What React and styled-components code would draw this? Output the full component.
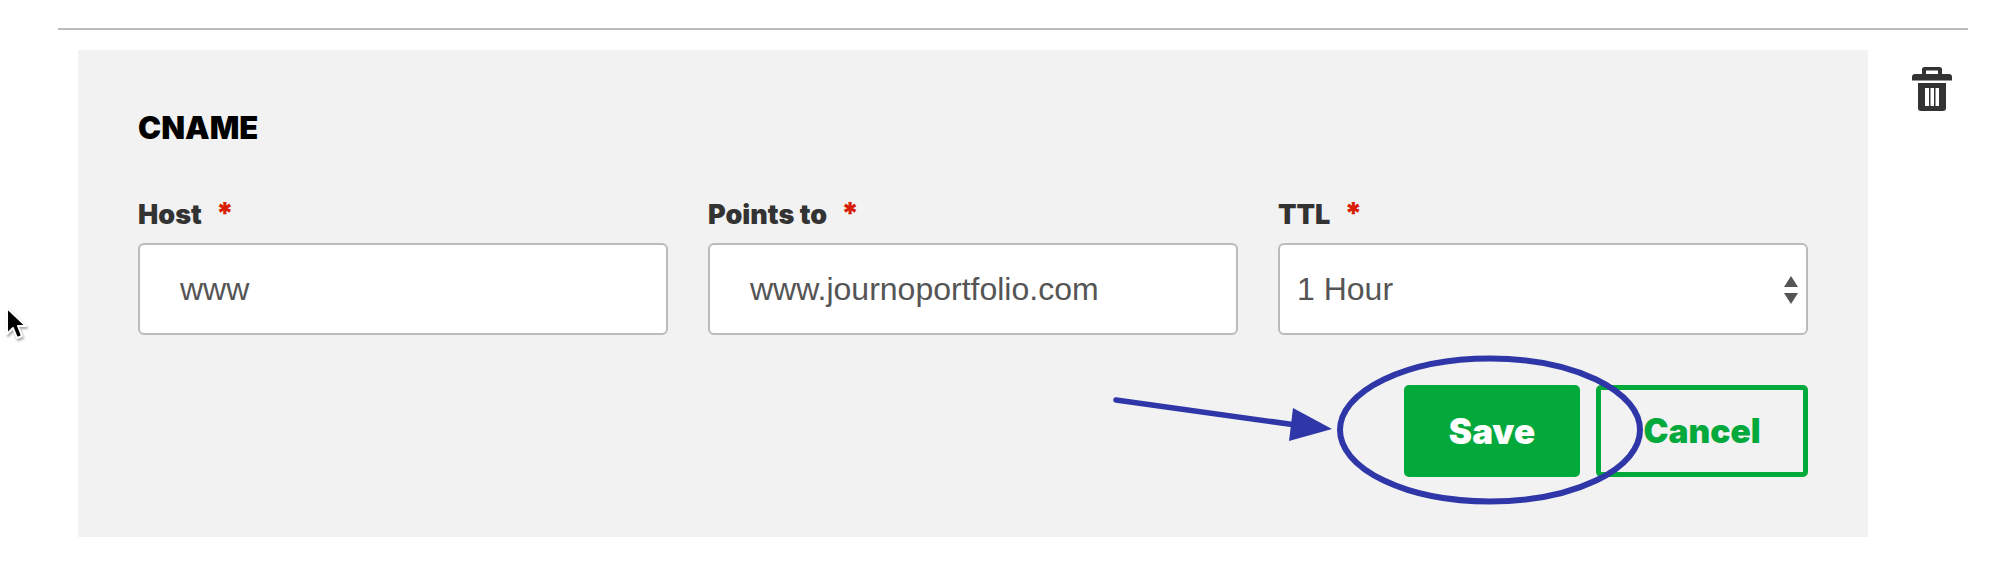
import React from "react";
import styled, { createGlobalStyle } from "styled-components";

const GlobalStyle = createGlobalStyle`
  html, body {
    margin: 0;
    padding: 0;
    background: #fff;
  }
`;

const headingFont = `Inter, "Noto Sans", sans-serif`;
const fieldFont = `"Liberation Sans", Arial, sans-serif`;

const Page = styled.div`
  position: relative;
  width: 1998px;
  height: 584px;
  overflow: hidden;
  padding-top: 28px;
  box-sizing: border-box;
`;

const Rule = styled.hr`
  width: 1910px;
  height: 2px;
  margin: 0 0 20px 58px;
  border: 0;
  background: #bcbcbc;
`;

const Row = styled.div`
  display: flex;
  align-items: flex-start;
  padding-left: 78px;
`;

const Panel = styled.section`
  width: 1790px;
  height: 487px;
  box-sizing: border-box;
  padding: 63px 60px 0 60px;
  background: #f2f2f2;
`;

const Title = styled.h2`
  margin: 0 0 56px;
  font-family: ${headingFont};
  font-size: 31px;
  line-height: 30px;
  font-weight: 900;
  color: #000;
`;

const Fields = styled.div`
  display: grid;
  grid-template-columns: repeat(3, 530px);
  column-gap: 40px;
`;

const Field = styled.div`
  position: relative;
  display: flex;
  flex-direction: column;
`;

const Label = styled.label`
  height: 44px;
  font-family: ${headingFont};
  font-size: 27px;
  line-height: 28px;
  font-weight: 900;
  color: #333;
`;

const Required = styled.span`
  margin-left: 14px;
  font-size: 30px;
  line-height: 28px;
  color: #d81e05;
`;

const controlStyles = `
  width: 100%;
  height: 92px;
  box-sizing: border-box;
  border: 2px solid #bbb;
  border-radius: 6px;
  background: #fff;
  font-family: ${fieldFont};
  font-size: 32px;
  color: #555;
  outline: none;
`;

const Input = styled.input`
  ${controlStyles}
  padding: 0 20px 0 40px;
`;

const Select = styled.select`
  ${controlStyles}
  appearance: none;
  padding: 0 40px 0 17px;
`;

const SelectArrows = styled.span`
  position: absolute;
  right: 10px;
  bottom: 31px;
  display: flex;
  flex-direction: column;
  gap: 6px;
  pointer-events: none;
`;

const Arrow = styled.span`
  width: 0;
  height: 0;
  border-left: 7.5px solid transparent;
  border-right: 7.5px solid transparent;
  ${(p) => (p.$down ? "border-top: 11px solid #555;" : "border-bottom: 11px solid #555;")}
`;

const Actions = styled.div`
  display: flex;
  justify-content: flex-end;
  gap: 16px;
  margin-top: 50px;
`;

const Button = styled.button`
  height: 92px;
  box-sizing: border-box;
  border-radius: 5px;
  border: 5px solid #04a93c;
  background: ${(p) => (p.$primary ? "#04a93c" : "transparent")};
  color: ${(p) => (p.$primary ? "#fff" : "#04a93c")};
  width: ${(p) => (p.$primary ? "176px" : "212px")};
  padding: 0;
  font-family: ${headingFont};
  font-size: ${(p) => (p.$primary ? "35px" : "33.500px")};
  font-weight: 900;
`;

const TrashButton = styled.div`
  margin: 17px 0 0 44px;
  line-height: 0;
`;

const Annotation = styled.svg`
  position: absolute;
  left: 0;
  top: 0;
  pointer-events: none;
`;

const Cursor = styled.svg`
  position: absolute;
  left: 4px;
  top: 306px;
  filter: drop-shadow(1px 2px 1px rgba(0, 0, 0, 0.35));
`;

const TrashIcon = () => (
  <svg width="40" height="44" viewBox="0 0 40 44">
    <path
      fill="#333"
      fillRule="evenodd"
      d="M10 2.5A2.5 2.5 0 0 1 12.5 0h15A2.5 2.5 0 0 1 30 2.5V7h7a3 3 0 0 1 3 3v3.500H0V10a3 3 0 0 1 3-3h7V2.500zM14 3.500V7h12V3.500H14zM6 16h28v25a3 3 0 0 1-3 3H9a3 3 0 0 1-3-3V16zm7 5v18h4V21h-4zm5.500 0v18h3.500V21h-3.500zm5 0v18h3.500V21h-3.500z"
    />
  </svg>
);

const App = () => (
  <Page>
    <GlobalStyle />
    <Rule />
    <Row>
      <Panel>
        <Title>CNAME</Title>
        <Fields>
          <Field>
            <Label>
              Host<Required>*</Required>
            </Label>
            <Input defaultValue="www" />
          </Field>
          <Field>
            <Label>
              Points to<Required>*</Required>
            </Label>
            <Input defaultValue="www.journoportfolio.com" />
          </Field>
          <Field>
            <Label>
              TTL<Required>*</Required>
            </Label>
            <Select defaultValue="1 Hour">
              <option>1 Hour</option>
            </Select>
            <SelectArrows>
              <Arrow />
              <Arrow $down />
            </SelectArrows>
          </Field>
        </Fields>
        <Actions>
          <Button $primary>Save</Button>
          <Button>Cancel</Button>
        </Actions>
      </Panel>
      <TrashButton>
        <TrashIcon />
      </TrashButton>
    </Row>

    <Annotation width="1998" height="584" viewBox="0 0 1998 584">
      <ellipse cx="1490" cy="430" rx="150" ry="71.500" fill="none" stroke="#2f37a8" strokeWidth="6" />
      <line x1="1116" y1="400" x2="1296" y2="425" stroke="#2f37a8" strokeWidth="5.500" strokeLinecap="round" />
      <polygon points="1332,429 1293,408 1289,441" fill="#2f37a8" />
    </Annotation>

    <Cursor width="26" height="38" viewBox="0 0 26 38">
      <path
        d="M3 2v26l6-6 4 10 5-2-4-10h8z"
        fill="#000"
        stroke="#fff"
        strokeWidth="2"
        strokeLinejoin="round"
      />
    </Cursor>
  </Page>
);

export default App;
